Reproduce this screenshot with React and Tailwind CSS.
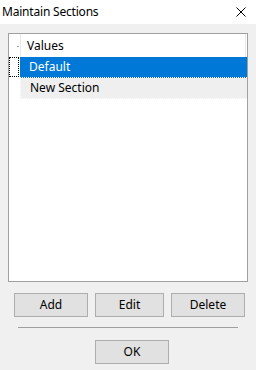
import React from 'react';

const sections = [
    { name: 'Default', selected: true },
    { name: 'New Section', selected: false },
];

// Small win32-style push button
function DlgButton({ label, width }) {
    return (
        <button
            className={`h-[24px] ${width} border border-[#adadad] bg-[#e1e1e1] text-[12px] text-black leading-none`}
        >
            {label}
        </button>
    );
}

export default function App() {
    return (
        <div className="w-[256px] h-[370px] bg-[#f0f0f0] flex flex-col font-['Noto_Sans',sans-serif] text-black select-none">
            {/* Title bar */}
            <div className="h-[24px] bg-white flex items-center justify-between pl-[2px] pr-[10px]">
                <span className="text-[12px] leading-none tracking-[-0.2px]">Maintain Sections</span>
                <svg width="10" height="10" viewBox="0 0 10 10">
                    <path d="M0.5 0.5 L9.5 9.5 M9.5 0.5 L0.5 9.5" stroke="#000" strokeWidth="1" />
                </svg>
            </div>

            {/* Tree / list */}
            <div className="mt-[9px] mx-[8px] h-[249px] border border-[#a0a0a0] bg-white flex flex-col">
                <div className="flex h-[23px]">
                    <div className="w-[11px] relative">
                        <div className="absolute right-[1px] top-[12px] w-[2px] h-[1px] bg-[#a0a0a0]"></div>
                    </div>
                    <div className="flex-1 flex items-center pl-[6px] border-l border-[#e8e8e8] mr-[1px] border-r text-[12px]">
                        Values
                    </div>
                </div>
                {sections.map((s) => (
                    <div key={s.name} className="flex h-[21px]">
                        <div className="w-[11px] pr-[1px]">
                            {s.selected && (
                                <div className="h-[20px] border border-dotted border-black"></div>
                            )}
                        </div>
                        <div
                            className={`flex-1 flex items-center pl-[9px] text-[12px] border-b border-dotted ${
                                s.selected
                                    ? 'bg-[#0078d7] text-white border-white'
                                    : 'bg-[#efefef] border-white border-l'
                            }`}
                        >
                            {s.name}
                        </div>
                    </div>
                ))}
            </div>

            {/* Action buttons */}
            <div className="flex pl-[14px] gap-[7px] mt-[11px]">
                <DlgButton label="Add" width="w-[74px]" />
                <DlgButton label="Edit" width="w-[69px]" />
                <DlgButton label="Delete" width="w-[74px]" />
            </div>

            <div className="mx-[18px] mt-[10px] h-[1px] bg-[#a0a0a0]"></div>

            <div className="flex justify-center mt-[12px] pl-[8px]">
                <DlgButton label="OK" width="w-[74px]" />
            </div>
        </div>
    );
}
